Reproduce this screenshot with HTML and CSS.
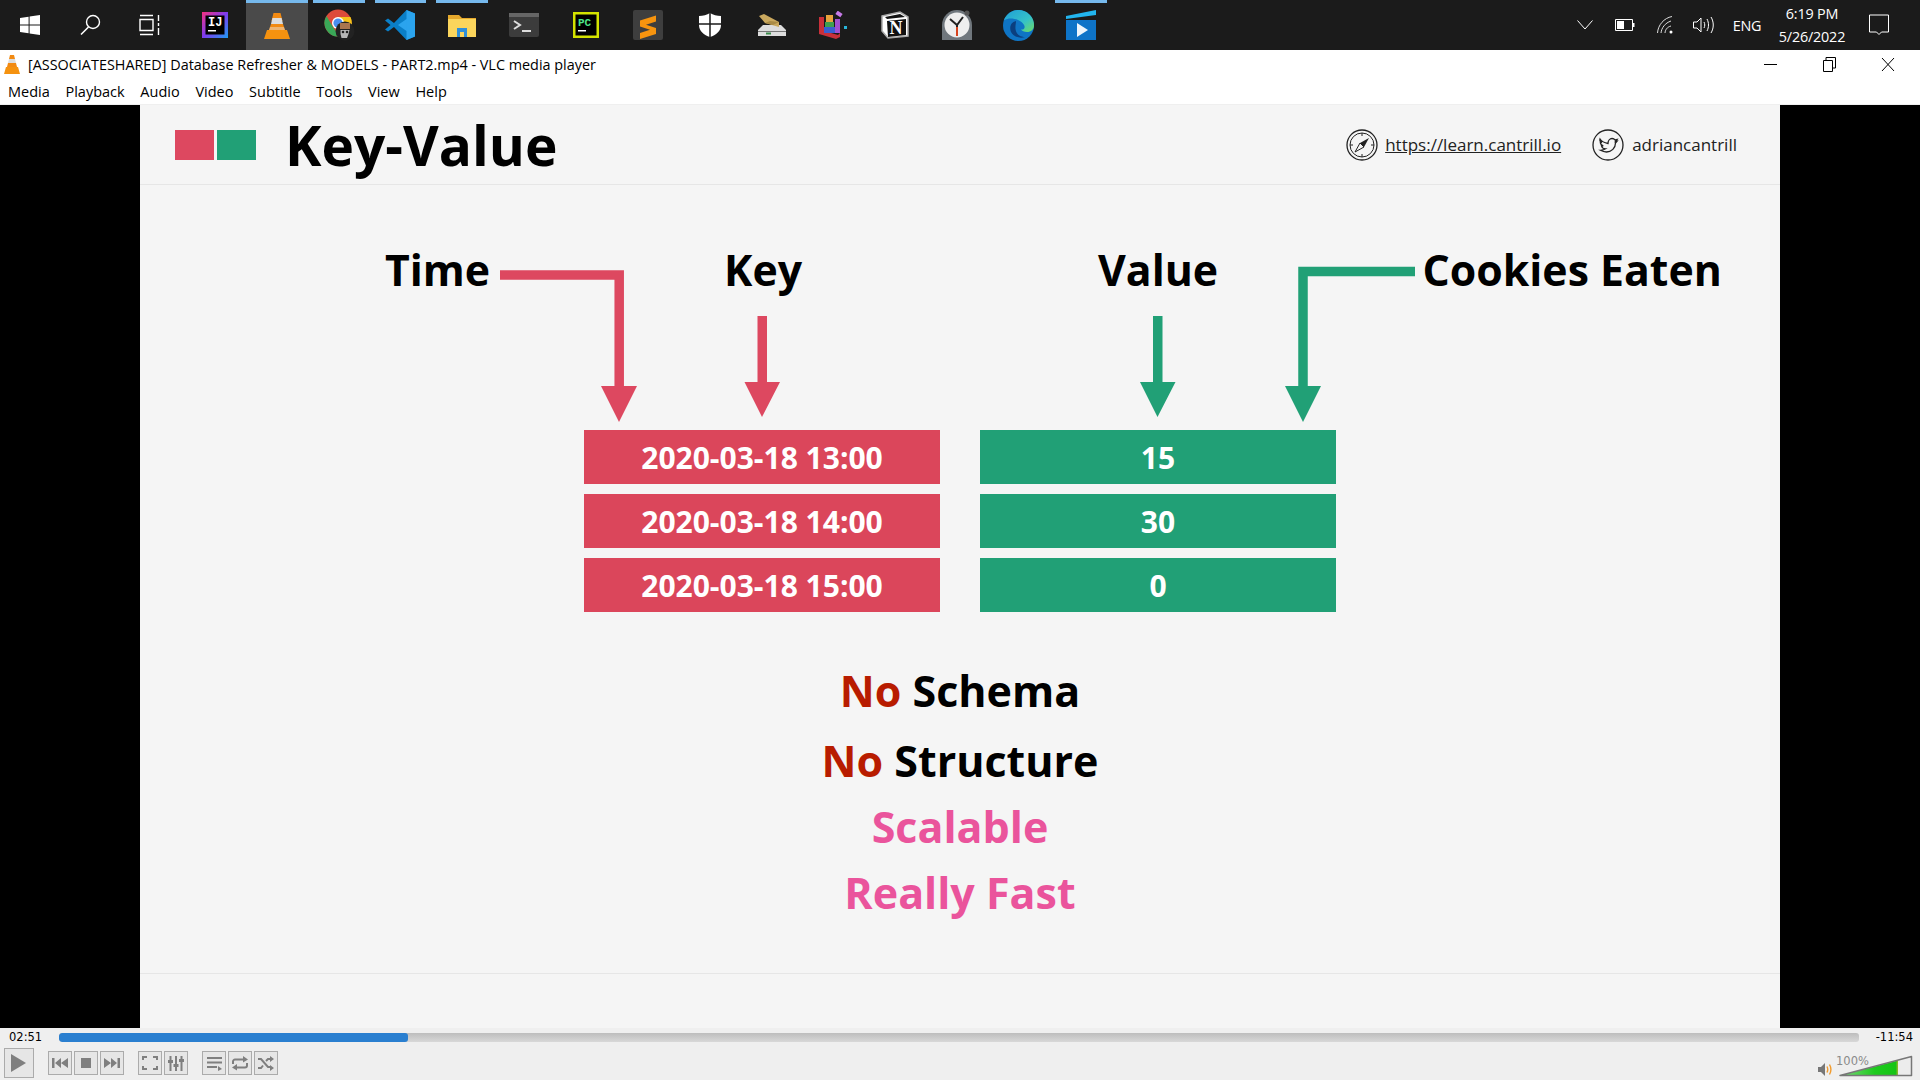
FILE: index.html
```html
<!DOCTYPE html>
<html lang="en">
<head>
    <meta charset="UTF-8">
    <title>VLC media player</title>
    <link rel="stylesheet" href="styles.css">
</head>
<body>
<div class="screen">
    <div class="taskbar">
        <div class="taskBtn sys"><svg class="icon" width="20" height="20" viewBox="0 0 20 20"><path fill="#fff" d="M0 3l8.6-1.3v7.8H0zM9.6 1.6L20 0v9.5H9.6zM0 10.5h8.6v7.8L0 17zM9.6 10.5H20V20L9.6 18.4z"/></svg></div>
        <div class="taskBtn sys"><svg class="icon" width="22" height="22" viewBox="0 0 22 22"><circle cx="14" cy="8" r="6.5" fill="none" stroke="#fff" stroke-width="1.4"/><path d="M9.5 13L2 20.5" stroke="#fff" stroke-width="1.6"/></svg></div>
        <div class="taskBtn sys lastSys"><svg class="icon" width="22" height="22" viewBox="0 0 22 22"><path fill="none" stroke="#fff" stroke-width="1.4" d="M1 5.5h13v11H1zM1 1.5h13M1 20.5h13M19.5 1v6M19.5 9v3M19.5 14v7"/></svg></div>
        <div class="taskBtn"><svg class="icon" width="26" height="26" viewBox="0 0 26 26"><defs><linearGradient id="ij" x1="0" y1="0" x2="1" y2="1"><stop offset="0" stop-color="#f5317f"/><stop offset=".5" stop-color="#7d3cf0"/><stop offset="1" stop-color="#1e9cf0"/></linearGradient></defs><rect width="26" height="26" fill="url(#ij)"/><rect x="3.500" y="3.500" width="19" height="19" fill="#000"/><text x="6" y="14" class="iconText" font-size="12" fill="#fff">IJ</text><rect x="6" y="18" width="8" height="1.500" fill="#fff"/></svg></div>
        <div class="taskBtn active"><svg class="icon" width="28" height="28" viewBox="0 0 28 28"><path fill="#f28a12" d="M10.500 2h7l2 8h-11z"/><path fill="#ddd" d="M9.400 7h9.200l1.400 6H8z"/><path fill="#f28a12" d="M8 13h12l2 6H6z"/><path fill="#e8e8e8" d="M7 16h14l1 3H6z" opacity=".45"/><path fill="#f5920f" d="M4 19h20l3 9H1z"/></svg></div>
        <div class="taskBtn open"><svg class="icon" width="32" height="32" viewBox="0 0 32 32"><circle cx="15" cy="14" r="13.500" fill="#dd4b3a"/><path fill="#f7c31a" d="M15 8h12.500a13.500 13.500 0 0 1-11 19.400z"/><path fill="#3aa757" d="M3.500 7L10 18l6.500 9.400A13.500 13.500 0 0 1 3.500 7z"/><circle cx="15" cy="14" r="6" fill="#fff"/><circle cx="15" cy="14" r="4.600" fill="#4a8ef0"/><circle cx="22" cy="22" r="9.500" fill="#222"/><path fill="#a9754f" d="M17 14h10v6H17z"/><path fill="#b8b8b8" d="M17.500 21h9l-1 4-1.500 4h-5.500l-1-4z"/><circle cx="20" cy="23" r="1.300" fill="#222"/><circle cx="24" cy="23" r="1.300" fill="#222"/></svg></div>
        <div class="taskBtn open"><svg class="icon" width="30" height="30" viewBox="0 0 30 30"><path fill="#0a7fc8" d="M0 10.500l3-2 6 4.500L21.500 0 30 3.500v23L21.500 30 9 17l-6 4.500-3-2L5.500 15z"/><path fill="#2ba4ee" d="M21.500 0L30 3.500v23L21.500 30zM21.500 9L13 15l8.500 6z"/></svg></div>
        <div class="taskBtn open"><svg class="icon" width="28" height="26" viewBox="0 0 28 26"><path fill="#e6a92c" d="M0 3h11l3 3h14v19H0z"/><path fill="#fbd55c" d="M0 7h28v18H0z"/><path fill="#2f8fd8" d="M9 16h10v9h-3v-5h-4v5H9z"/></svg></div>
        <div class="taskBtn"><svg class="icon" width="30" height="24" viewBox="0 0 30 24"><rect width="30" height="24" rx="2" fill="#3c3c3c"/><rect width="30" height="4" fill="#666"/><path fill="none" stroke="#ddd" stroke-width="2" d="M5 8l6 4-6 4M13 18h9"/></svg></div>
        <div class="taskBtn"><svg class="icon" width="26" height="26" viewBox="0 0 26 26"><rect width="26" height="26" fill="#d4e300"/><rect x="2.500" y="2.500" width="21" height="21" fill="#000"/><text x="5" y="13.500" class="iconText" font-size="11" fill="#4de68a">PC</text><rect x="5" y="18" width="8" height="1.500" fill="#fff"/></svg></div>
        <div class="taskBtn"><svg class="icon" width="30" height="30" viewBox="0 0 30 30"><rect width="30" height="30" rx="2" fill="#3e3e3e"/><path fill="#f7940e" d="M7 10.500l16-5v6l-10 3.200 10 3.300v6l-16 5v-6l10-3.200-10-3.300z"/></svg></div>
        <div class="taskBtn"><svg class="icon" width="22" height="24" viewBox="0 0 22 24"><path fill="#fff" d="M11 0c3 2 7 3 11 3v9c0 6-5 10-11 12C5 22 0 18 0 12V3c4 0 8-1 11-3z"/><path stroke="#1b1b1b" stroke-width="1.500" d="M11 0v24M0 11h22"/></svg></div>
        <div class="taskBtn"><svg class="icon" width="28" height="22" viewBox="0 0 28 22"><path fill="#ddd" d="M5 11h18l5 5v6H0v-6z"/><path fill="#777" d="M0 17h28v1H0z"/><rect x="8" y="18.500" width="5" height="2" fill="#3a8a4a"/><path fill="#c9a85e" d="M1 2l5-2 15 8v5L7 9z"/><path fill="#a98a45" d="M21 8l-6 3-8-2 5-2z"/></svg></div>
        <div class="taskBtn"><svg class="icon" width="30" height="28" viewBox="0 0 30 28"><path fill="#c9303a" d="M1 6h5v14l14 4 2-2v4l-4 2L1 23z"/><rect x="8" y="4" width="7" height="8" fill="#e8a33c"/><rect x="7" y="11" width="9" height="5" fill="#3f9f4f"/><rect x="6" y="16" width="11" height="6" fill="#3a5fd0"/><rect x="17" y="8" width="5" height="14" fill="#a24fd0"/><rect x="18" y="1" width="6" height="4" fill="#c77ae8" transform="rotate(35 21 3)"/><rect x="26" y="15" width="3" height="3" fill="#28b4d8"/></svg></div>
        <div class="taskBtn"><svg class="icon" width="28" height="28" viewBox="0 0 28 28"><path fill="#fff" stroke="#aaa" stroke-width="1.500" d="M1 5l18-4 8 5v19l-20 2-6-7z"/><path fill="#111" d="M4 6l15-3 5 3-18 2zM6 10l19-2v16L7 26z"/><text x="8.500" y="23" font-size="18" font-weight="700" class="iconSerif" fill="#fff">N</text></svg></div>
        <div class="taskBtn"><svg class="icon" width="30" height="30" viewBox="0 0 30 30"><path fill="#70777d" d="M0 30V15a15 15 0 0 1 30 0v15z"/><circle cx="25" cy="3" r="2.500" fill="#555"/><circle cx="15" cy="15" r="12.500" fill="#eee"/><path fill="none" stroke="#222" stroke-width="2" d="M8 9l7 6 6-8M15 15v2"/><path stroke="#d8431e" stroke-width="2" d="M15 17v9"/></svg></div>
        <div class="taskBtn"><svg class="icon" width="31" height="31" viewBox="0 0 31 31"><defs><linearGradient id="edge" x1="0" y1="0" x2="1" y2="1"><stop offset="0" stop-color="#1f9fd8"/><stop offset=".6" stop-color="#35c1c8"/><stop offset="1" stop-color="#6fdc62"/></linearGradient></defs><circle cx="15.500" cy="15.500" r="15.500" fill="#0f74c4"/><path fill="url(#edge)" d="M1 10A15.500 15.500 0 0 1 31 15.500c0 4-3 6.500-7 6.500-3 0-5-1-6-2.500 3 .5 4-1.500 3.500-3.500C20 10 8 6 1 10z"/><path fill="#0b3f7f" d="M13 11c-5 1-7 6-5 11 2 4 8 7 14 5-5 0-9-3-9.500-8-.3-3 .5-6 .5-8z"/></svg></div>
        <div class="taskBtn open"><svg class="icon" width="30" height="30" viewBox="0 0 30 30"><path fill="#22b5ee" d="M0 6l30-6v5L0 9z"/><path fill="#0e74c8" d="M0 10h30v20H0z"/><path fill="#eef6fc" d="M11 13l11 7-11 7z"/></svg></div>

        <div class="tray">
            <div class="trayItem wChevron"><svg width="16" height="10" viewBox="0 0 16 10"><path fill="none" stroke="#fff" d="M.5.500L8 9l7.500-8.500"/></svg></div>
            <div class="trayItem wBattery"><svg width="20" height="12" viewBox="0 0 20 12"><path fill="none" stroke="#fff" d="M.5.500h17v11H.5z"/><rect x="2" y="2" width="7" height="8" fill="#fff"/><rect x="18" y="4" width="1.500" height="4" fill="#fff"/></svg></div>
            <div class="trayItem wWifi"><svg width="18" height="18" viewBox="0 0 18 18"><path fill="none" stroke="#ddd" d="M.5 17C1 9 7 2 15 .5M4 17c.5-5 4-10 10-12M8 17c.2-3 2-6 6-7"/><circle cx="14" cy="16" r="1.500" fill="#fff"/></svg></div>
            <div class="trayItem wSound"><svg width="22" height="18" viewBox="0 0 22 18"><path fill="none" stroke="#fff" d="M.5 6h3.500l4-4v14l-4-4H.5zM11 6c1 2 1 4 0 6M14 3c2 4 2 8 0 12M18 1c3 5 3 11 0 16"/></svg></div>
            <div class="trayItem wLang">ENG</div>
            <div class="trayItem wClock"><span>6:19 PM</span><span>5/26/2022</span></div>
            <div class="trayItem wNotify"><svg width="22" height="22" viewBox="0 0 22 22"><path fill="none" stroke="#fff" d="M1.500 1h19v17h-7l-2.500 2.500L8.500 18h-7z"/></svg></div>
        </div>
    </div>

    <div class="titlebar">
        <svg class="titleIcon" width="16" height="19" viewBox="0 0 16 19"><path fill="#f28a12" d="M6 0h4l1 4H5z"/><path fill="#ddd" d="M5 4h6l1 4H4z"/><path fill="#f28a12" d="M4 8h8l1 4H3z"/><path fill="#f5920f" d="M2 12h12l2 7H0z"/></svg>
        <span class="titleText">[ASSOCIATESHARED] Database Refresher &amp; MODELS - PART2.mp4 - VLC media player</span>
        <div class="winBtns">
            <span class="winBtn"><svg width="13" height="13" viewBox="0 0 13 13"><path stroke="#000" d="M0 6.500h13"/></svg></span>
            <span class="winBtn"><svg width="13" height="15" viewBox="0 0 13 15"><path fill="none" stroke="#000" d="M.5 3.500h9v11h-9zM3 3.500V.5h9.500v10.500H9.500"/></svg></span>
            <span class="winBtn"><svg width="14" height="15" viewBox="0 0 14 15"><path stroke="#000" d="M1 1l12 13M13 1L1 14"/></svg></span>
        </div>
    </div>
    <ul class="menubar">
        <li>Media</li><li>Playback</li><li>Audio</li><li>Video</li><li>Subtitle</li><li>Tools</li><li>View</li><li>Help</li>
    </ul>

    <div class="video">
        <div class="slide">
            <div class="slideHead">
                <span class="square red"></span>
                <span class="square green"></span>
                <h1 class="slideTitle">Key-Value</h1>
                <div class="slideLinks">
                    <svg width="32" height="32" viewBox="0 0 32 32"><circle cx="16" cy="16" r="15" fill="none" stroke="#222" stroke-width="1.300"/><circle cx="16" cy="16" r="12" fill="none" stroke="#222"/><path fill="#222" d="M23 9l-5 9-4-4z"/><path fill="none" stroke="#222" d="M9 23l5-9 4 4zM16 4v3M16 25v3M4 16h3M25 16h3"/></svg>
                    <a class="siteLink" href="javascript:;">https://learn.cantrill.io</a>
                    <svg class="twitter" width="32" height="32" viewBox="0 0 32 32"><circle cx="16" cy="16" r="15" fill="none" stroke="#222" stroke-width="1.300"/><path fill="none" stroke="#222" stroke-width="1.300" d="M8 10c2 3 5 4 8 4.500 0-3 2-5 4-5 1.500 0 2.500.700 3 1.500l2-.5-1.500 2 1.500-.3-1.500 1.800c0 5-4 9-9 9-2 0-4-.500-6-1.700 2 0 3.500-.500 5-1.500-2 0-3.500-1-4-3h1.800c-2-.500-3-2-3-4l1.700.500C8 12.500 7.500 11.500 8 10z"/></svg>
                    <span>adriancantrill</span>
                </div>
            </div>

            <div class="slideBody">
                <svg class="arrows" width="1640" height="300" viewBox="140 185 1640 300">
                    <path fill="none" stroke="#dd4860" stroke-width="9.500" d="M500 275h119.200v112"/>
                    <path fill="#dd4860" d="M601 386h36l-18 36z"/>
                    <path fill="#dd4860" d="M757.500 316h9.500v66h13l-18 35-17.500-35h13z"/>
                    <path fill="#21a076" d="M1153 316h9.500v66h13l-18 35-17.500-35h13z"/>
                    <path fill="none" stroke="#21a076" stroke-width="9.500" d="M1415 271.500h-112v115"/>
                    <path fill="#21a076" d="M1285 386h36l-18 36z"/>
                </svg>
                <span class="label timeLabel">Time</span>
                <span class="label keyLabel">Key</span>
                <span class="label valueLabel">Value</span>
                <span class="label cookiesLabel">Cookies Eaten</span>

                <div class="rows">
                    <div class="row redRow">2020-03-18 13:00</div>
                    <div class="row green">15</div>
                    <div class="row redRow">2020-03-18 14:00</div>
                    <div class="row green">30</div>
                    <div class="row redRow">2020-03-18 15:00</div>
                    <div class="row green">0</div>
                </div>

                <ul class="points">
                    <li class="gapAfter"><span class="no">No</span> Schema</li>
                    <li><span class="no">No</span> Structure</li>
                    <li class="pink">Scalable</li>
                    <li class="pink">Really Fast</li>
                </ul>
            </div>
            <div class="slideFoot"></div>
        </div>
    </div>

    <div class="controls">
        <div class="seekRow">
            <span class="time">02:51</span>
            <div class="seek"><div class="seekFill"></div></div>
            <span class="time">-11:54</span>
        </div>
        <div class="btnRow">
            <span class="btn play"><svg width="16" height="18" viewBox="0 0 16 18"><path fill="#7f7f7f" d="M0 0l15 9-15 9z"/></svg></span>
            <div class="btnGroup">
                <span class="btn"><svg width="16" height="10" viewBox="0 0 16 10"><path fill="#7f7f7f" d="M0 0h2.500v10H0zM3 5l6-5v10zM9 5l7-5v10z"/></svg></span>
                <span class="btn"><svg width="10" height="10" viewBox="0 0 10 10"><rect width="10" height="10" fill="#7f7f7f"/></svg></span>
                <span class="btn"><svg width="16" height="10" viewBox="0 0 16 10"><path fill="#7f7f7f" d="M16 0h-2.500v10H16zM13 5L7 0v10zM7 5L0 0v10z"/></svg></span>
            </div>
            <div class="btnGroup">
                <span class="btn"><svg width="16" height="14" viewBox="0 0 16 14"><path fill="none" stroke="#7f7f7f" stroke-width="2" d="M1 4V1h4M11 1h4v3M15 10v3h-4M5 13H1v-3"/></svg></span>
                <span class="btn"><svg width="16" height="15" viewBox="0 0 16 15"><path stroke="#7f7f7f" stroke-width="2" d="M2.500 0v15M8 0v15M13.500 0v15"/><path fill="#7f7f7f" d="M0 4h5v3H0zM5.500 8h5v3h-5zM11 3h5v3h-5z"/></svg></span>
            </div>
            <div class="btnGroup">
                <span class="btn"><svg width="15" height="15" viewBox="0 0 15 15"><path stroke="#7f7f7f" stroke-width="2" d="M0 2h15M0 6.500h15M0 11h10"/><path fill="#7f7f7f" d="M11 10l4 3-4 2z"/></svg></span>
                <span class="btn"><svg width="16" height="15" viewBox="0 0 16 15"><path fill="none" stroke="#7f7f7f" stroke-width="2" d="M1 8V5.500a2 2 0 0 1 2-2h10M15 7v2.500a2 2 0 0 1-2 2H3"/><path fill="#7f7f7f" d="M11 0l5 3.500-5 3zM5 8l-5 3.500 5 3z"/></svg></span>
                <span class="btn"><svg width="16" height="15" viewBox="0 0 16 15"><path fill="none" stroke="#7f7f7f" stroke-width="2" d="M0 3h3l7 8h3M0 12h3l2-2.500M8 5l2-2h3"/><path fill="#7f7f7f" d="M12 0l4 3-4 3zM12 9l4 3-4 3z"/></svg></span>
            </div>
            <div class="volume">
                <svg class="volSpeaker" width="15" height="15" viewBox="0 0 15 15"><path fill="#777" d="M0 5h3l4-4v13l-4-4H0z"/><path fill="none" stroke="#f29b2c" stroke-width="1.400" d="M9 4.500c1 2 1 4 0 6M11.500 2.500c2 3.500 2 6.500 0 10"/></svg>
                <svg width="74" height="22" viewBox="0 0 74 22"><defs><linearGradient id="vol" x1="0" x2="1" y1="0" y2="0"><stop offset="0" stop-color="#7fd67f"/><stop offset=".6" stop-color="#1ecb1e"/><stop offset=".96" stop-color="#16c416"/><stop offset="1" stop-color="#a3b52d"/></linearGradient></defs><path fill="#ececec" d="M1 20.500L72.500 1.500v19z"/><path fill="url(#vol)" d="M1 20.500L59 5.500v15z"/><path fill="none" stroke="#777" stroke-width="1.500" stroke-linejoin="round" d="M1 20.500L72.500 1.500v19z"/></svg>
                <span class="volText">100%</span>
            </div>
        </div>
    </div>
</div>
</body>
</html>
```

FILE: styles.css
```css
*{
    margin: 0;
    padding: 0;
    box-sizing: border-box;
}
li{
    list-style: none;
}
body{
    font-family: "Open Sans", "Noto Sans", sans-serif;
    background: #000;
}
.screen{
    width: 1920px;
    height: 1080px;
    display: flex;
    flex-direction: column;
    overflow: hidden;
}

/* taskbar */
.taskbar{
    height: 50px;
    flex: none;
    display: flex;
    background: #1b1b1b;
}
.taskBtn{
    width: 61.85px;
    height: 50px;
    flex: none;
    display: flex;
    align-items: center;
    justify-content: center;
    position: relative;
}
.taskBtn.sys{
    width: 60px;
}
.taskBtn.lastSys{
    margin-right: 4px;
}
.taskBtn.active{
    background: #4a4a4a;
}
.taskBtn.active::before,
.taskBtn.open::before{
    content: "";
    position: absolute;
    top: 0;
    left: 5px;
    right: 5px;
    height: 3px;
    background: #76b9ed;
}
.taskBtn.active::before{
    left: 0;
    right: 0;
}
.iconText{
    font-family: "Liberation Mono", monospace;
    font-weight: 700;
}
.iconSerif{
    font-family: "Liberation Serif", serif;
}
.tray{
    margin-left: auto;
    padding-right: 14px;
    display: flex;
    color: #fff;
    font-size: 14.4px;
}
.trayItem{
    height: 50px;
    display: flex;
    flex-direction: column;
    align-items: center;
    justify-content: center;
}
.wChevron, .wBattery{
    width: 40px;
}
.wWifi{
    width: 41px;
}
.wSound{
    width: 36px;
}
.wLang{
    width: 50px;
    letter-spacing: -0.2px;
}
.wClock{
    width: 80px;
    gap: 4px;
    line-height: 19px;
    letter-spacing: -0.2px;
}
.wNotify{
    width: 54px;
}

/* window title + menu */
.titlebar{
    height: 28px;
    flex: none;
    display: flex;
    align-items: center;
    padding-left: 4px;
    background: #fff;
}
.titleText{
    margin-left: 8px;
    font-size: 14.4px;
    color: #000;
}
.winBtns{
    margin-left: auto;
    padding-right: 3px;
    display: flex;
}
.winBtn{
    width: 58.5px;
    display: flex;
    align-items: center;
    justify-content: center;
}
.menubar{
    height: 27px;
    flex: none;
    display: flex;
    gap: 15.7px;
    padding: 1px 0 0 8px;
    align-items: center;
    background: #fff;
    border-bottom: 1px solid #efefef;
    font-size: 14.5px;
    color: #000;
}

/* video frame */
.video{
    flex: 1;
    min-height: 0;
    display: flex;
    justify-content: center;
    background: #000;
}
.slide{
    width: 1640px;
    display: flex;
    flex-direction: column;
    background: #f5f5f5;
    color: #000;
}
.slideHead{
    height: 80px;
    flex: none;
    display: flex;
    align-items: center;
    padding: 0 43px 0 35px;
    border-bottom: 1px solid #e6e6e6;
}
.square{
    width: 39px;
    height: 30px;
    margin-right: 3px;
}
.red{
    background: #dd4860;
}
.redRow{
    background: #db465b;
}
.green{
    background: #21a076;
}
.slideTitle{
    margin-left: 26px;
    font-size: 55px;
    font-weight: 700;
    line-height: 70px;
}
.slideLinks{
    margin-left: auto;
    display: flex;
    align-items: center;
    font-size: 17px;
    color: #222;
}
.siteLink{
    margin-left: 7px;
    color: #222;
}
.twitter{
    margin: 0 8px 0 31px;
}
.slideBody{
    flex: 1;
    position: relative;
}
.arrows{
    position: absolute;
    top: 0;
    left: 0;
}
.label{
    position: absolute;
    top: 55px;
    font-size: 42.8px;
    font-weight: 700;
    line-height: 60px;
    white-space: nowrap;
}
.timeLabel{
    left: 245px;
}
.keyLabel{
    left: 584px;
}
.valueLabel{
    left: 958px;
}
.cookiesLabel{
    left: 1282.5px;
}
.rows{
    display: grid;
    grid-template-columns: 356px 356px;
    gap: 10px 40px;
    padding: 245px 0 0 444px;
}
.row{
    height: 54px;
    display: flex;
    align-items: center;
    justify-content: center;
    font-size: 30px;
    font-weight: 700;
    color: #fff;
}
.points{
    margin-top: 46px;
    text-align: center;
    font-size: 43px;
    font-weight: 700;
    line-height: 66px;
}
.gapAfter{
    margin-bottom: 4px;
}
.no{
    color: #b81c00;
}
.pink{
    color: #ea549c;
}
.slideFoot{
    height: 55px;
    flex: none;
    border-top: 1px solid #e6e6e6;
}

/* player controls */
.controls{
    height: 52px;
    flex: none;
    background: #efefef;
    color: #000;
}
.seekRow{
    height: 18px;
    display: flex;
    align-items: center;
    gap: 17px;
    padding: 0 7px 0 9px;
    font-family: "DejaVu Sans", sans-serif;
    font-size: 11.5px;
}
.seek{
    flex: 1;
    height: 9px;
    border-radius: 3px;
    background: linear-gradient(#bdbdbd, #d8d8d8);
    overflow: hidden;
}
.seekFill{
    width: 349px;
    height: 9px;
    border-radius: 3px;
    background: #2a7fd0;
}
.btnRow{
    height: 34px;
    display: flex;
    align-items: center;
    padding: 0 7px 0 4px;
}
.btn{
    width: 24px;
    height: 24px;
    display: flex;
    align-items: center;
    justify-content: center;
    background: #e6e6e6;
    border: 1px solid #ababab;
}
.btn.play{
    width: 30px;
    height: 30px;
}
.btnGroup{
    display: flex;
    gap: 2px;
    margin-left: 14px;
}
.volume{
    margin-left: auto;
    margin-bottom: 3px;
    align-self: flex-end;
    display: flex;
    align-items: flex-end;
    position: relative;
}
.volSpeaker{
    margin-right: 6px;
}
.volText{
    position: absolute;
    left: 18px;
    top: -1px;
    font-family: "DejaVu Sans", sans-serif;
    font-size: 11.5px;
    line-height: 14px;
    color: #8a8a8a;
}
```
